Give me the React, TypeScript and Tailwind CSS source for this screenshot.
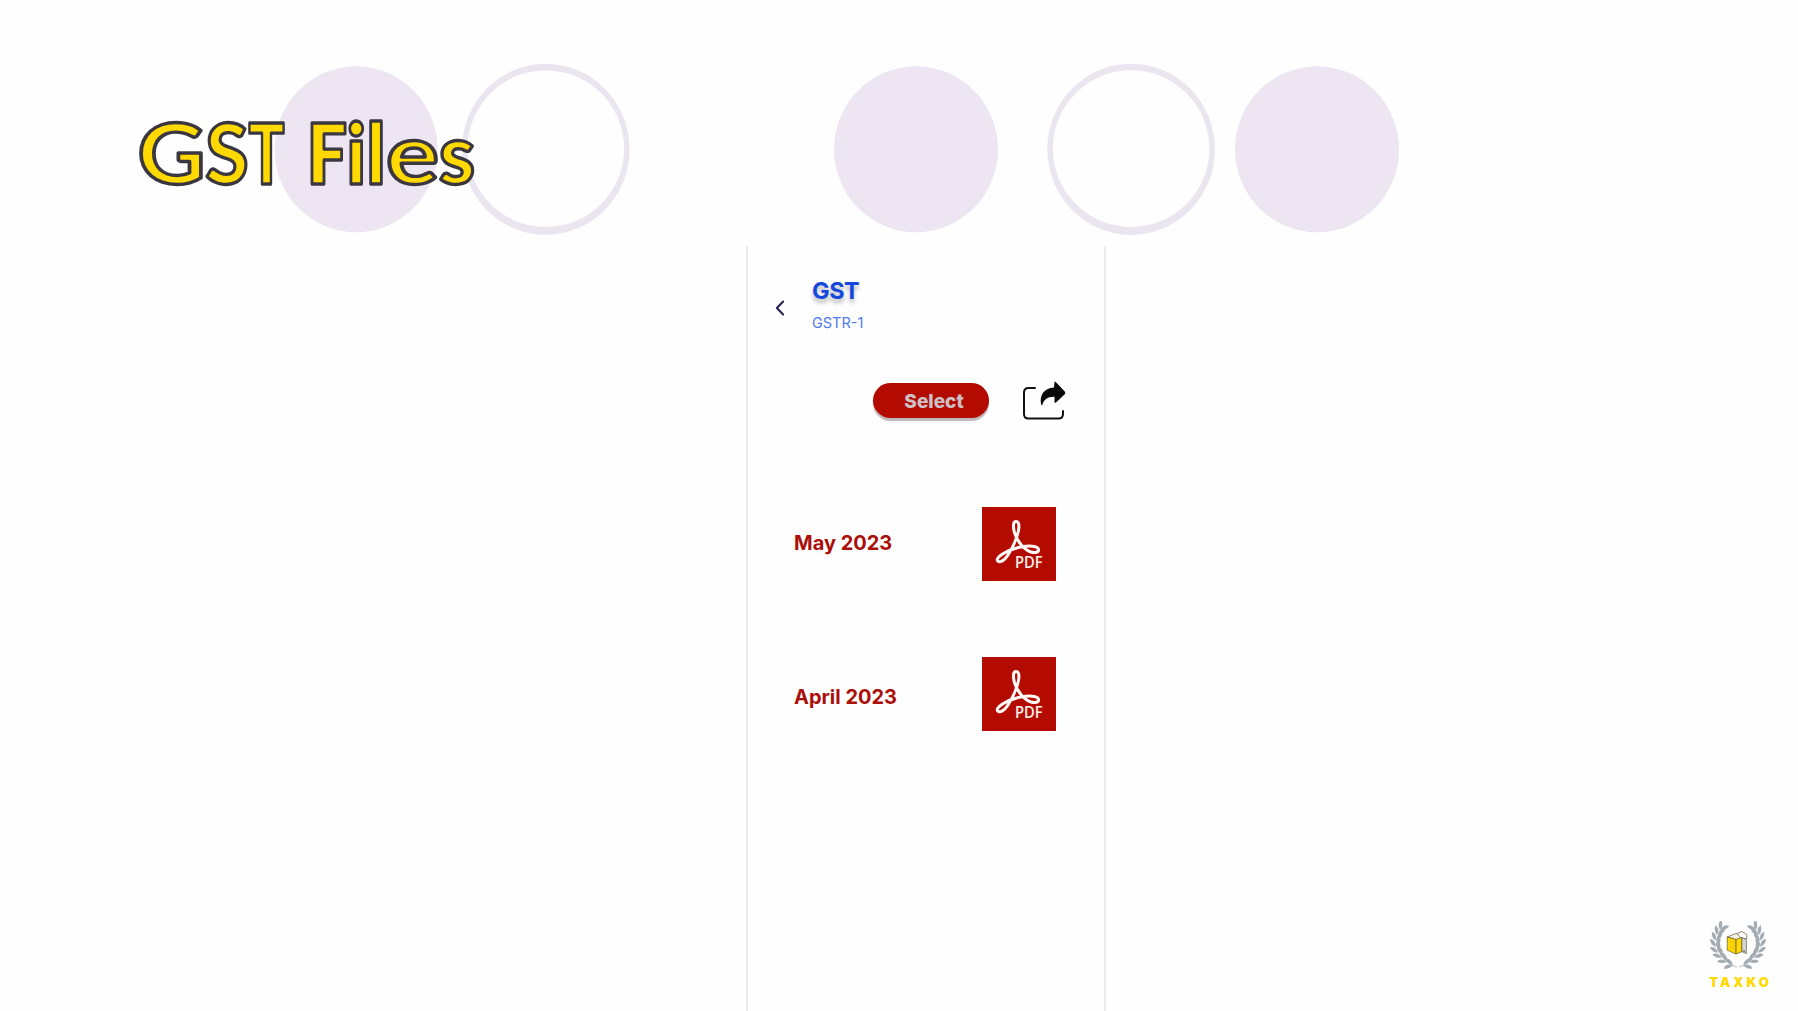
const GLYPHS = [
  { c: 'G', x: 137.5, w: 68, weight: 700 },
  { c: 'S', x: 205.5, w: 43, weight: 900 },
  { c: 'T', x: 248.5, w: 36, weight: 900 },
  { c: ' ', x: 286, w: 14, weight: 700 },
  { c: 'F', x: 307, w: 40, weight: 800 },
  { c: 'i', x: 347, w: 18.5, weight: 800 },
  { c: 'l', x: 367, w: 18, weight: 800 },
  { c: 'e', x: 386, w: 53, weight: 700 },
  { c: 's', x: 439, w: 36, weight: 900 },
];

function Title() {
  return (
    <svg className="absolute top-0 left-0" width="700" height="240">
      <text
        y="184"
        fontSize="84"
        fontFamily="Lato, sans-serif"
        fill="#ffd900"
        stroke="#3b3740"
        strokeWidth="3.4"
        strokeLinejoin="round"
        xmlSpace="preserve"
      >
        {GLYPHS.map((g) => (
          <tspan key={g.x} x={g.x} fontWeight={g.weight} textLength={g.w} lengthAdjust="spacingAndGlyphs">{g.c}</tspan>
        ))}
      </text>
    </svg>
  );
}

function Ring({ x }: { x: number }) {
  return (
    <path
      fillRule="evenodd"
      fill="#ebe5f0"
      d={`M${x} 149.3a83.800 85.500 0 1 0 167.600 0a83.800 85.500 0 1 0 -167.600 0M${x + 5.5} 148.600a78.300 78.200 0 1 0 156.600 0a78.300 78.200 0 1 0 -156.600 0`}
    />
  );
}

function Circles() {
  return (
    <svg className="absolute top-0 left-0" width="1798" height="240">
      <g fill="#ede6f2">
        <ellipse cx="356" cy="149.3" rx="81.5" ry="83" />
        <ellipse cx="916" cy="149.3" rx="82" ry="83" />
        <ellipse cx="1317" cy="149.3" rx="82" ry="83" />
      </g>
      <Ring x={462} />
      <Ring x={1047.3} />
    </svg>
  );
}

function PdfIcon() {
  return (
    <div className="relative size-[74px] bg-[#b30b00]">
      <svg className="absolute inset-0" width="74" height="74" viewBox="0 0 74 74" fill="none">
        <path
          d="M34 14.600C30.800 14.600 31 20.500 32.600 26C35 33.500 41 42 49 45C53 46.300 56.800 45.200 56.600 42.600C56.300 39.500 50 38.600 43.500 39.300C34 40.400 26.500 43.200 20.500 47C16 50 14.300 52.300 15.800 54C17.800 56.200 22.500 53.500 26 48C30.500 41 35 30.500 36.400 24C37.500 18.500 37 14.600 34 14.600Z"
          stroke="#fff8f6"
          strokeWidth="3"
        />
      </svg>
      <span className="absolute top-[46px] left-[33px] origin-left scale-x-[0.95] font-['Open_Sans'] text-[15.500px] leading-[18px] font-semibold text-[#fff0ee]">PDF</span>
    </div>
  );
}

function ShareIcon() {
  return (
    <svg width="44" height="42" viewBox="0 0 44 42" fill="none">
      <path d="M13 8H6.500Q2 8 2 12.500V34Q2 38.500 6.500 38.500H36.500Q41 38.500 41 34V31" stroke="#111" strokeWidth="2" strokeLinecap="round" />
      <path d="M32.500 1.500Q33.500 1.500 34 2.300L43 11.800Q43.600 13 43 14L34 22.500Q33 23.300 32.500 22.300V16.800C25.500 16.500 22 19.500 20.300 25Q19.700 25.700 19.300 25C17 16 21.500 8 32 7.500Z" fill="#0a0a0a" />
    </svg>
  );
}

function FileRow({ label }: { label: string }) {
  return (
    <div className="flex h-[74px] items-center justify-between pr-12 pl-[46px]">
      <span className="text-[20px] leading-6 font-bold text-[#ab0f09] first-letter:tracking-normal">{label}</span>
      <PdfIcon />
    </div>
  );
}

const LEAVES = [
  [22, 46.5, 190], [16, 42, 212], [11, 37, 230], [7.5, 31.5, 246], [6, 25, 264], [6.5, 18.500, 278], [8.5, 12.5, 292], [12, 7, 305],
];

function Laurel() {
  return (
    <g fill="#a3abb2">
      <path d="M29 49C9 43 3 23 13 5" fill="none" stroke="#a3abb2" strokeWidth="0.9" />
      {LEAVES.map(([x, y, a]) => (
        <g key={y} transform={`translate(${x} ${y}) rotate(${a})`}>
          <path d="M-2.500 0Q0.500 -5.500 6.500 -5.500Q5.500 0.500 -2.500 0Z" />
          <path d="M-2.500 0.500Q0.500 6 6.500 6Q5.500 0 -2.500 0.500Z" />
        </g>
      ))}
    </g>
  );
}

function Brand() {
  return (
    <div className="absolute top-[921px] left-[1705px] flex w-[70px] flex-col items-center">
      <svg className="mr-1" width="56" height="49" viewBox="0 0 60 52">
        <Laurel />
        <g transform="translate(60 0) scale(-1 1)"><Laurel /></g>
        <g stroke="#5a5338" strokeWidth="0.7" strokeLinejoin="round" transform="translate(-1.500 -0.500) scale(1.05)">
          <path d="M19 16.500L28 13L39 17L30 20Z" fill="#f6f1dc" />
          <path d="M29 13L34 11L39 14V18L34 19Z" fill="#fff" />
          <path d="M19 16.500L28 19V34L19 30Z" fill="#ffd900" />
          <path d="M28 19L34 17V31.500L28 34Z" fill="#ffd900" />
          <path d="M34 17L38.500 19V33.500L34 31.500Z" fill="#d8d8d8" />
        </g>
        <path d="M22 19V33M25 20V34" stroke="#e0ba00" strokeWidth="0.6" />
        <circle cx="36.500" cy="32" r="0.9" fill="#555" />
      </svg>
      <span className="mt-[4px] ml-[1px] text-[13px] leading-4 font-black tracking-[3px] text-[#ffd900]">TAXKO</span>
    </div>
  );
}

export default function App() {
  return (
    <main className="relative h-[1011px] w-[1798px] overflow-hidden bg-[#fefefe] pt-[246px] font-[Inter,sans-serif]">
      <Circles />
      <h1><Title /></h1>
      <section className="ml-[746px] flex h-[765px] w-[360px] flex-col border-x-2 border-[#ececee]">
        <header className="flex items-center pt-[30px] pl-[27px]">
          <svg width="10" height="16" viewBox="0 0 9 14" fill="none" className="mt-[7px]">
            <path d="M7.300 1.200L1.700 7L7.300 12.800" stroke="#29214f" strokeWidth="1.9" strokeLinecap="round" strokeLinejoin="round" />
          </svg>
          <div className="ml-[27px]">
            <h2 className="text-[23.500px] leading-[30px] font-bold tracking-[-0.500px] text-[#1549de] [text-shadow:0_4px_4px_rgba(0,0,0,0.28)]">GST</h2>
            <p className="mt-[7px] text-[14.500px] leading-5 text-[#4f79ee]">GSTR-1</p>
          </div>
        </header>
        <div className="mt-[47px] flex h-[42px] items-start justify-end pr-[38px]">
          <button className="mt-[3px] h-[35px] w-[116px] rounded-full bg-[#b30b00] pl-[6px] text-[19px] leading-[38px] font-extrabold text-[#cdc1c7] shadow-[0_3px_1px_#bfb7b8]">
            Select
          </button>
          <div className="ml-[33px]"><ShareIcon /></div>
        </div>
        <div className="mt-[85px] flex flex-col gap-[75.500px] [&>div:first-child>span]:-mt-[2px] [&>div:last-child>span]:mt-[6px]">
          <FileRow label="May 2023" />
          <FileRow label="April 2023" />
        </div>
      </section>
      <Brand />
    </main>
  );
}
